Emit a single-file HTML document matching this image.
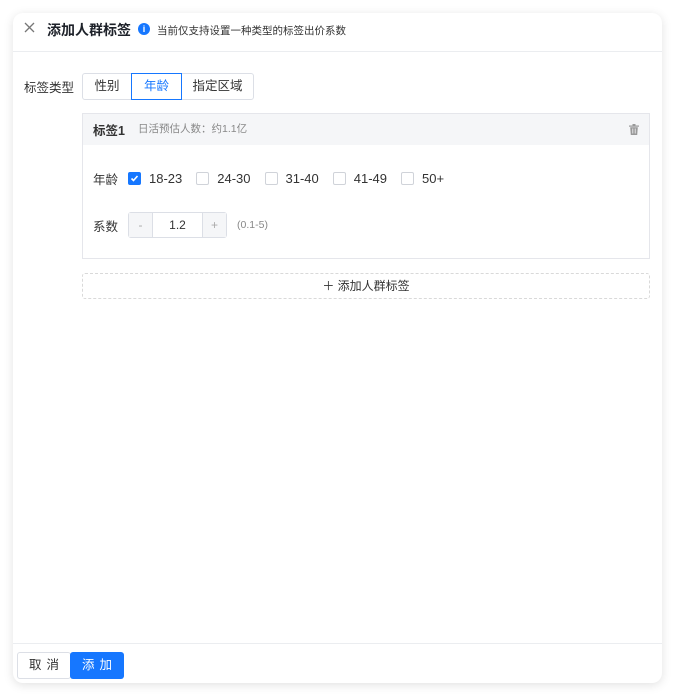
<!DOCTYPE html>
<html><head><meta charset="utf-8"><style>
*{box-sizing:border-box;margin:0;padding:0}
body{width:675px;height:695px;background:#fff;font-family:"Liberation Sans","Noto Sans CJK SC",sans-serif;position:relative;overflow:hidden;color:#1d2129}
.modal{position:absolute;left:13px;top:13px;width:649px;height:670px;background:#fff;border-radius:10px;box-shadow:0 2px 10px rgba(0,0,0,0.12)}
.hdr{height:39px;border-bottom:1px solid #ebedf0;position:relative}
.x{position:absolute;left:11px;top:9px}
.title{position:absolute;left:34px;top:7px;font-size:14px;font-weight:bold;color:#1d2129}
.info{position:absolute;left:125px;top:10px;width:12px;height:12px;border-radius:50%;background:#1677ff;color:#fff;font-size:9px;font-weight:bold;text-align:center;line-height:12px}
.tip{position:absolute;left:144px;top:10px;font-size:10.5px;color:#333}
.lbl{position:absolute;left:11px;top:64px;font-size:12.5px;color:#333}
.seg{position:absolute;left:69px;top:60px;display:flex;height:27px}
.seg div{border:1px solid #dcdfe6;line-height:25px;font-size:12.5px;color:#333;margin-left:-1px;text-align:center}
.seg div:first-child{border-radius:3px 0 0 3px;margin-left:0}
.seg div:last-child{border-radius:0 3px 3px 0}
.seg .on{border-color:#1677ff;color:#1677ff;position:relative;z-index:1}
.card{position:absolute;left:69px;top:100px;width:568px;height:146px;border:1px solid #e5e6eb}
.ch{height:31px;background:#f5f6f8;position:relative}
.ch b{position:absolute;left:10px;top:6px;font-size:12.5px;color:#333}
.ch span{position:absolute;left:55px;top:7px;font-size:10.5px;color:#888}
.trash{position:absolute;right:10px;top:10px}
.row{position:absolute;left:10px;font-size:12.5px;color:#333;display:flex;align-items:center}
.cb{width:13px;height:13px;border:1px solid #d0d3d9;border-radius:2px;margin-right:8px;background:#fff}
.cb.on{background:#1677ff;border-color:#1677ff;position:relative}
.opt{display:flex;align-items:center;margin-right:14px;font-size:13px}
.num{display:flex;height:26px;border:1px solid #dcdfe6;border-radius:3px;margin-left:10px}
.num div{line-height:24px;text-align:center;font-size:12px}
.add{position:absolute;left:69px;top:260px;width:568px;height:26px;border:1px dashed #d9d9d9;border-radius:3px;text-align:center;line-height:24px;font-size:12px;color:#333}
.ft{position:absolute;left:0;top:630px;width:649px;border-top:1px solid #ebedf0}
.btn{position:absolute;top:639px;height:27px;line-height:27px;font-size:12.5px;border-radius:3px;text-align:center;letter-spacing:5px;text-indent:5px}
</style></head><body>
<div class="modal">
<div class="hdr"><svg class="x" width="11" height="11" viewBox="0 0 11 11"><path d="M1 1l9 9M10 1l-9 9" stroke="#777" stroke-width="1.3"/></svg><span class="title">添加人群标签</span><span class="info">i</span><span class="tip">当前仅支持设置一种类型的标签出价系数</span></div>
<div class="lbl">标签类型</div>
<div class="seg"><div style="width:50px">性别</div><div class="on" style="width:51px">年龄</div><div style="width:73px">指定区域</div></div>
<div class="card">
<div class="ch"><b>标签1</b><span>日活预估人数：约1.1亿</span>
<svg class="trash" width="10" height="11" viewBox="0 0 10 11"><rect x="0" y="1.5" width="10" height="1.2" fill="#999"/><rect x="3.5" y="0" width="3" height="1.5" fill="#999"/><path d="M1.2 3.2h7.6l-.6 7.8H1.8z" fill="#999"/><path d="M3.8 4.5v5M6.2 4.5v5" stroke="#f5f6f8" stroke-width=".8"/></svg></div>
<div class="row" style="top:55px"><span style="margin-right:10px">年龄</span>
<div class="opt"><div class="cb on"><svg width="11" height="11" viewBox="0 0 11 11" style="position:absolute;left:0;top:0"><path d="M2.5 5.5l2 2 4-4.5" stroke="#fff" stroke-width="1.6" fill="none"/></svg></div>18-23</div>
<div class="opt"><div class="cb"></div>24-30</div>
<div class="opt"><div class="cb"></div>31-40</div>
<div class="opt"><div class="cb"></div>41-49</div>
<div class="opt"><div class="cb"></div>50+</div></div>
<div class="row" style="top:98px"><span>系数</span>
<div class="num"><div style="width:24px;background:#f5f6f8;color:#aaa;border-right:1px solid #dcdfe6">-</div><div style="width:49px;color:#333">1.2</div><div style="width:24px;background:#f5f6f8;color:#aaa;border-left:1px solid #dcdfe6">+</div></div>
<span style="margin-left:10px;font-size:10.5px;color:#888">(0.1-5)</span></div>
</div>
<div class="add">＋ 添加人群标签</div>
<div class="ft"></div>
<div class="btn" style="left:4px;width:54px;border:1px solid #dcdfe6;color:#333;line-height:25px">取消</div>
<div class="btn" style="left:57px;width:54px;background:#1677ff;color:#fff">添加</div>
</div>
</body></html>
